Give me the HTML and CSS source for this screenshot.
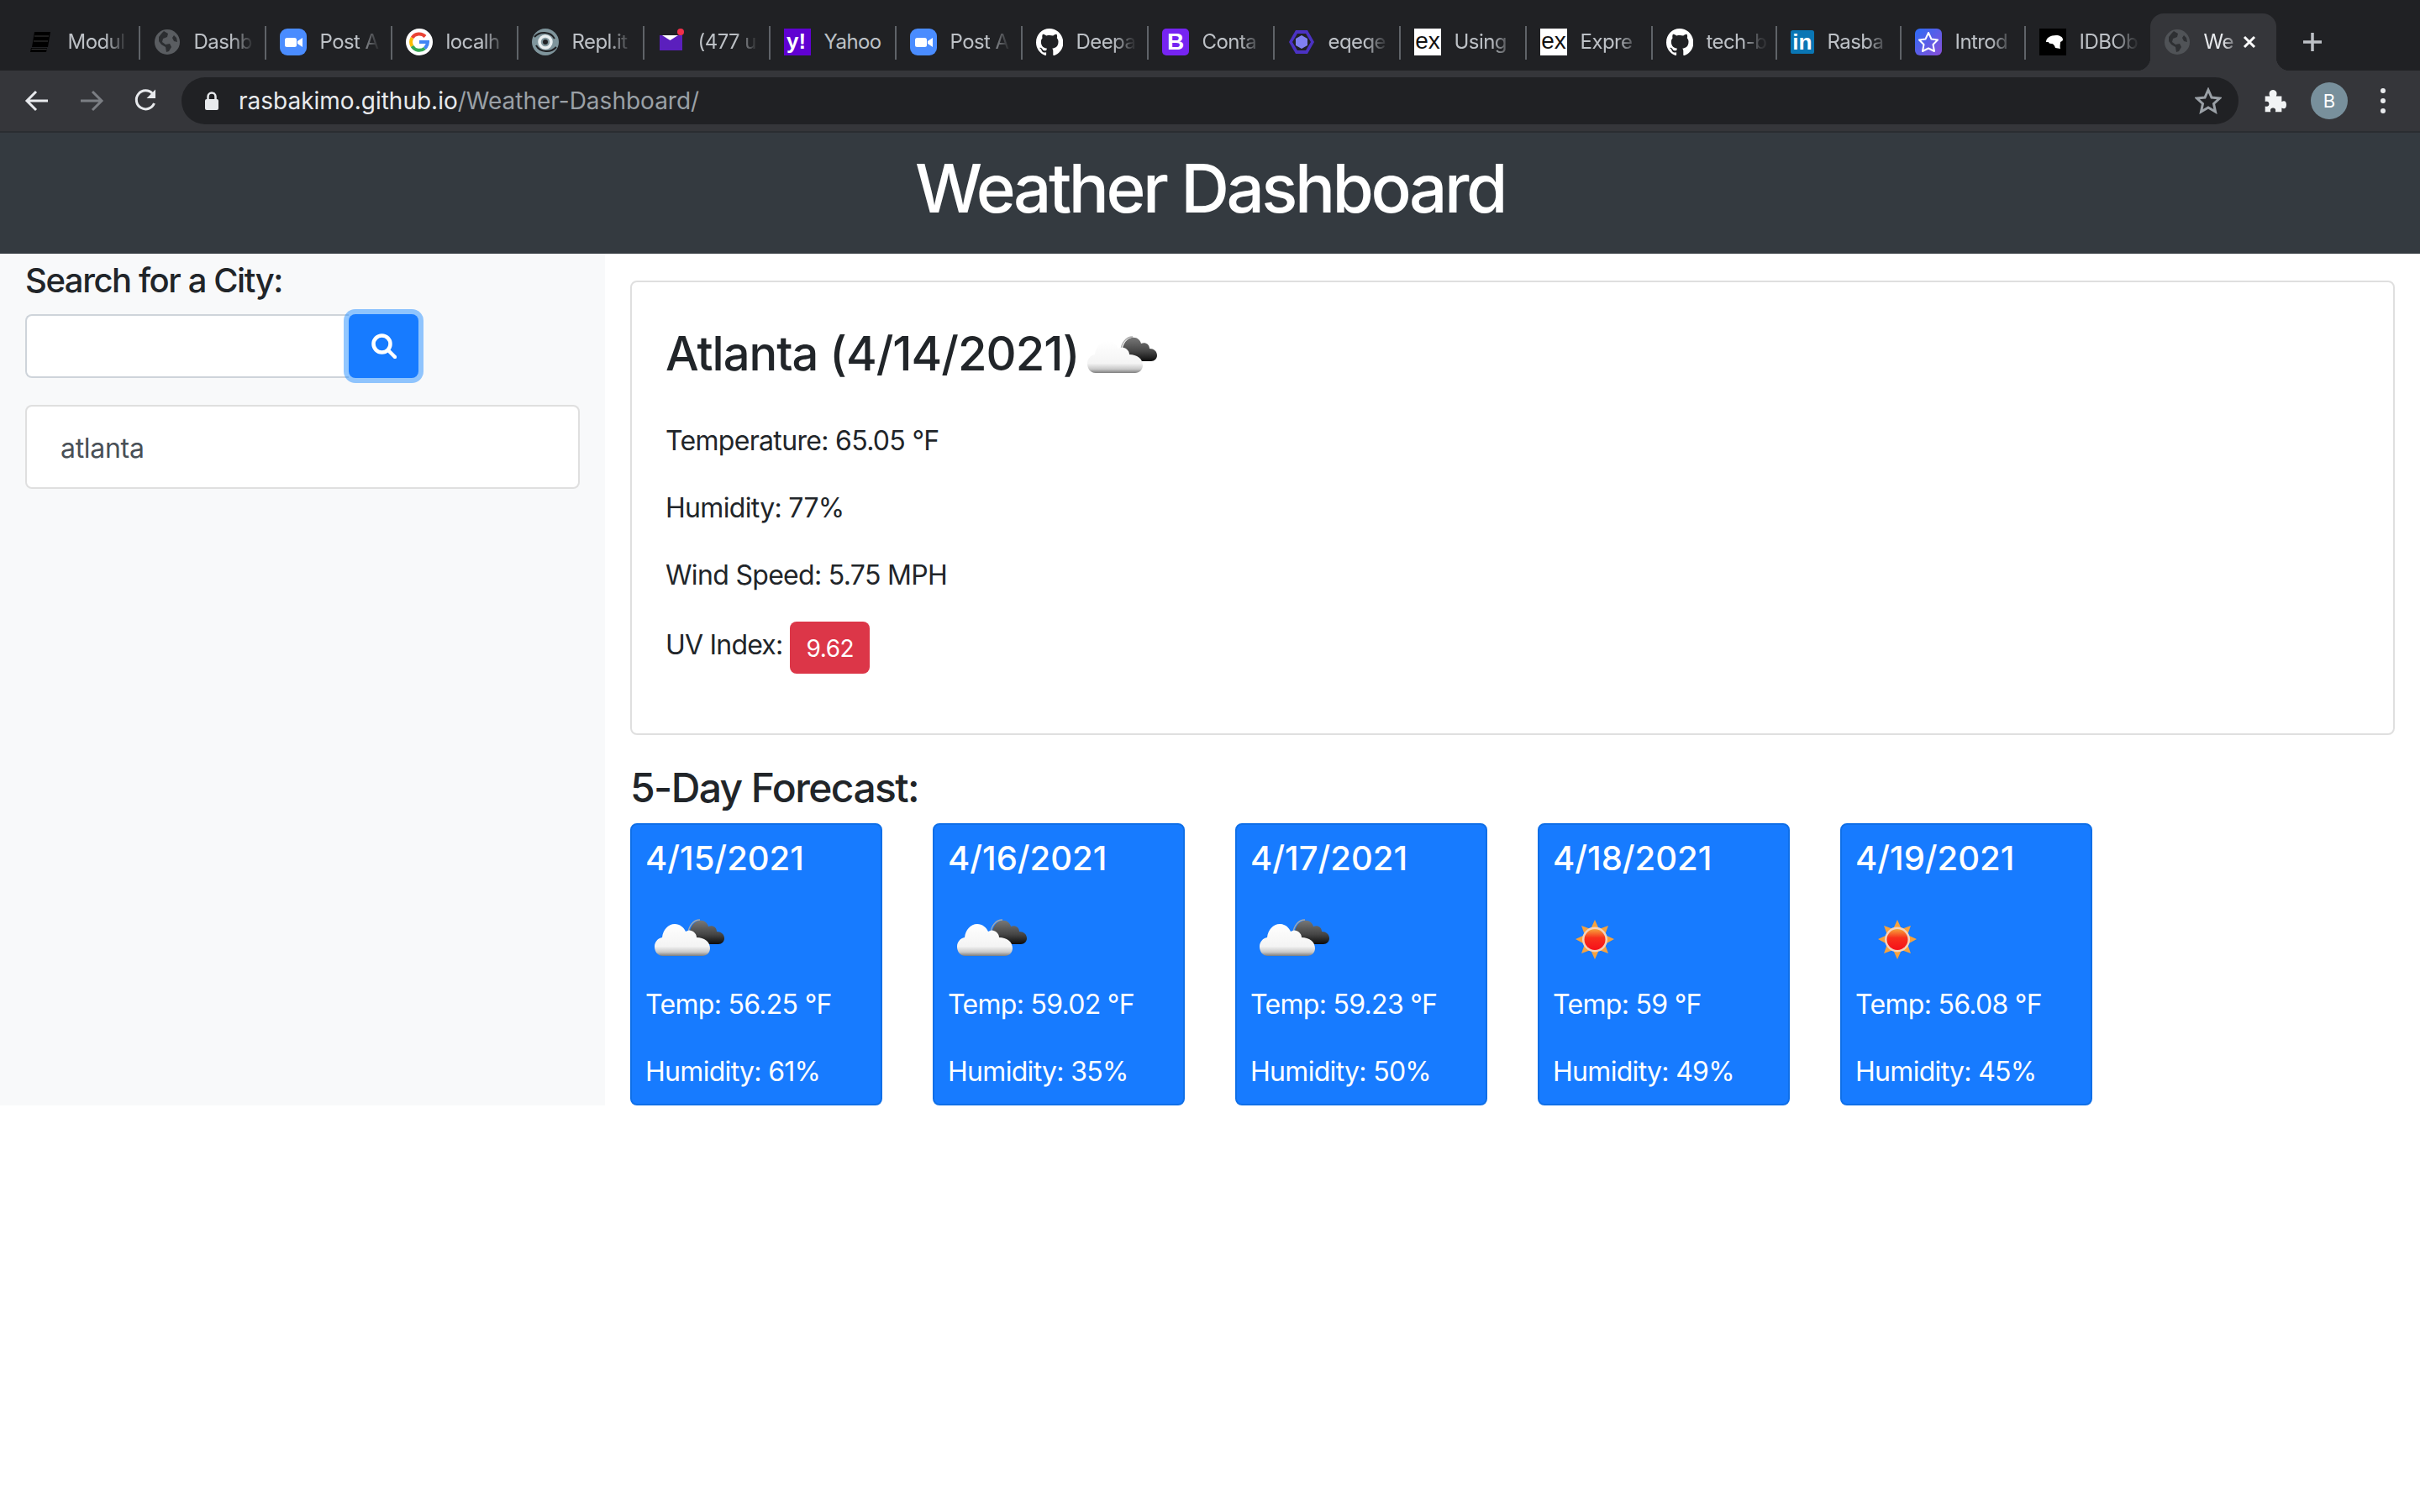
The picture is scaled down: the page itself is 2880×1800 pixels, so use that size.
FILE: index.html
```html
<!DOCTYPE html>
<html lang="en">
<head>
<meta charset="utf-8">
<title>Weather Dashboard</title>
<link rel="stylesheet" href="styles.css">
</head>
<body>
<svg class="defs" width="0" height="0" aria-hidden="true">
  <defs>
    <linearGradient id="whiteCloud" x1="0" y1="0" x2="0" y2="1">
      <stop offset="0" stop-color="#fff"/><stop offset=".7" stop-color="#f4f4f4"/><stop offset=".88" stop-color="#c8c8c8"/><stop offset="1" stop-color="#7e7e7e"/>
    </linearGradient>
    <linearGradient id="darkCloud" x1="0" y1="0" x2="0" y2="1">
      <stop offset="0" stop-color="#777"/><stop offset=".6" stop-color="#444"/><stop offset="1" stop-color="#0c0c0c"/>
    </linearGradient>
    <linearGradient id="sunDisc" x1="0" y1="0" x2="0" y2="1">
      <stop offset="0" stop-color="#f7a53a"/><stop offset=".42" stop-color="#f8301c"/><stop offset="1" stop-color="#f5101a"/>
    </linearGradient>
    <linearGradient id="introGrad" x1="0" y1="0" x2="1" y2="1">
      <stop offset="0" stop-color="#2b6cf6"/><stop offset="1" stop-color="#8a4fd8"/>
    </linearGradient>
    <symbol id="i-clouds" viewBox="0 0 100 100">
      <path fill="url(#darkCloud)" d="M52 48C52 40 55 30 64 28C70 27 74 31 75 35C80 33 85 36 85 41C90 41 94 44 94 49C94 53 91 56 87 56H56Z"/>
      <path fill="none" stroke="#aaa" stroke-width="1.4" d="M51 44C51 35 57 27 65 27"/>
      <path fill="url(#whiteCloud)" d="M21 70C14 70 11 64 11 59C11 53 15 49 20 48C21 39 27 32 35 32C41 32 46 36 48 41C51 39 54 39 57 41C60 43 61 46 61 48C70 48 77 53 77 61C77 66 73 70 68 70Z"/>
    </symbol>
    <symbol id="i-sun" viewBox="0 0 100 100">
      <polygon fill="#f6a23e" points="50,27 55,38 66,34 62,45 73,50 62,56 66,67 55,63 50,74 45,63 34,67 38,56 27,50 38,45 34,34 45,38"/>
      <circle cx="50" cy="50.500" r="15" fill="#f4d3bd"/>
      <circle cx="50" cy="50.500" r="12.500" fill="url(#sunDisc)"/>
    </symbol>
    <symbol id="i-globe" viewBox="0 0 32 32">
      <circle cx="16" cy="16" r="15" fill="#5a5d61"/>
      <path fill="#2c2e31" d="M12 3l5 3-1 4-5 2-1 4 4 3 5-1 2 4-3 5-3 1-1-6-5-3-3-4 0-5 4-5zM24 8l3 3 1 5-4-1-2-4z"/>
    </symbol>
    <symbol id="i-zoom" viewBox="0 0 32 32">
      <rect width="32" height="32" rx="9" fill="#4a8cff"/>
      <rect x="6" y="11" width="14" height="11" rx="2.500" fill="#fff"/>
      <path fill="#fff" d="M21 15l6-4v11l-6-4z"/>
    </symbol>
    <symbol id="i-github" viewBox="0 0 32 32">
      <path fill="#fff" d="M16 0C7 0 0 7.300 0 16.400c0 7.200 4.600 13.400 11 15.600.8.100 1.100-.4 1.100-.8v-2.900c-4.500 1-5.400-2.100-5.400-2.100-.7-1.900-1.800-2.400-1.800-2.400-1.500-1 .1-1 .1-1 1.600.1 2.500 1.700 2.500 1.700 1.400 2.500 3.800 1.800 4.700 1.400.2-1.100.6-1.800 1-2.200-3.600-.4-7.300-1.800-7.300-8.100 0-1.800.6-3.300 1.700-4.400-.2-.4-.7-2.100.2-4.300 0 0 1.300-.4 4.400 1.700 1.300-.4 2.600-.5 4-.5s2.700.2 4 .5c3.100-2.100 4.400-1.700 4.400-1.700.9 2.200.3 3.900.2 4.300 1 1.100 1.700 2.600 1.700 4.400 0 6.300-3.700 7.700-7.300 8.100.6.500 1.100 1.500 1.100 3.100v4.500c0 .4.300 .9 1.100.8 6.400-2.200 11-8.400 11-15.600C32 7.300 25 0 16 0z"/>
    </symbol>
  </defs>
</svg>

<div class="browser">
  <div class="tabstrip">
    <div class="tab">
      <svg class="favicon" viewBox="0 0 32 32"><path fill="#000" d="M8 4h19l-3 18H5z"/><path fill="#000" d="M4 23h19l-1 5H3z"/><path fill="none" stroke="#3a3a3a" stroke-width="1" d="M8 9h17M7 15h17M4.500 24.500h18"/></svg>
      <span class="tab-label">Modul</span>
    </div>
    <div class="tab">
      <svg class="favicon"><use href="#i-globe"/></svg>
      <span class="tab-label">Dashb</span>
    </div>
    <div class="tab">
      <svg class="favicon"><use href="#i-zoom"/></svg>
      <span class="tab-label">Post A</span>
    </div>
    <div class="tab">
      <svg class="favicon" viewBox="0 0 32 32"><circle cx="16" cy="16" r="16" fill="#fff"/><path fill="none" stroke="#ea4335" stroke-width="4" d="M23 9.500A10 10 0 0 0 7.500 11"/><path fill="none" stroke="#fbbc05" stroke-width="4" d="M7.500 11a10 10 0 0 0 0 10"/><path fill="none" stroke="#34a853" stroke-width="4" d="M7.500 21a10 10 0 0 0 15 2.500"/><path fill="none" stroke="#4285f4" stroke-width="4" d="M22.500 23.500A10 10 0 0 0 26 16H16"/></svg>
      <span class="tab-label">localh</span>
    </div>
    <div class="tab">
      <svg class="favicon" viewBox="0 0 32 32"><circle cx="16" cy="16" r="16" fill="#7f959c"/><path fill="none" stroke="#202124" stroke-width="2" d="M3 10c6-7 19-7 24 2M29 22c-6 7-19 7-24-2"/><circle cx="16" cy="16" r="7" fill="none" stroke="#e8eef0" stroke-width="3.500"/><circle cx="16" cy="16" r="3" fill="#202124"/></svg>
      <span class="tab-label">Repl.it</span>
    </div>
    <div class="tab">
      <svg class="favicon" viewBox="0 0 32 32"><rect x="2" y="8" width="27" height="18" fill="#5b1fbd"/><path fill="#fff" d="M5 8h19l-9.500 6z"/><circle cx="27" cy="4" r="4" fill="#f0304a"/></svg>
      <span class="tab-label">(477 u</span>
    </div>
    <div class="tab">
      <svg class="favicon" viewBox="0 0 32 32"><rect width="32" height="32" fill="#6001d2"/><text class="fav-text fav-yahoo" x="3" y="24">y!</text></svg>
      <span class="tab-label tab-label-full">Yahoo</span>
    </div>
    <div class="tab">
      <svg class="favicon"><use href="#i-zoom"/></svg>
      <span class="tab-label">Post A</span>
    </div>
    <div class="tab">
      <svg class="favicon"><use href="#i-github"/></svg>
      <span class="tab-label">Deepa</span>
    </div>
    <div class="tab">
      <svg class="favicon" viewBox="0 0 32 32"><rect width="32" height="32" rx="5" fill="#7624f2"/><text class="fav-text fav-b" x="16" y="25" text-anchor="middle">B</text></svg>
      <span class="tab-label">Conta</span>
    </div>
    <div class="tab">
      <svg class="favicon" viewBox="0 0 32 32"><polygon fill="#4b32c3" points="9,2 23,2 31,16 23,30 9,30 1,16"/><polygon fill="#202124" points="11,6 21,6 27,16 21,26 11,26 5,16"/><polygon fill="#8080f2" points="16,8 23,12 23,20 16,24 9,20 9,12"/></svg>
      <span class="tab-label">eqeqe</span>
    </div>
    <div class="tab">
      <svg class="favicon" viewBox="0 0 32 32"><rect width="32" height="32" fill="#fff"/><text class="fav-text fav-ex" x="16" y="24" text-anchor="middle">ex</text></svg>
      <span class="tab-label">Using</span>
    </div>
    <div class="tab">
      <svg class="favicon" viewBox="0 0 32 32"><rect width="32" height="32" fill="#fff"/><text class="fav-text fav-ex" x="16" y="24" text-anchor="middle">ex</text></svg>
      <span class="tab-label">Expre</span>
    </div>
    <div class="tab tab-narrow">
      <svg class="favicon"><use href="#i-github"/></svg>
      <span class="tab-label">tech-b</span>
    </div>
    <div class="tab tab-narrow">
      <svg class="favicon favicon-in" viewBox="0 0 32 32"><rect width="32" height="32" rx="3" fill="#0a76b4"/><text class="fav-text fav-in" x="16" y="26" text-anchor="middle">in</text></svg>
      <span class="tab-label">Rasba</span>
    </div>
    <div class="tab tab-narrow">
      <svg class="favicon" viewBox="0 0 32 32"><rect width="32" height="32" rx="6" fill="url(#introGrad)"/><polygon fill="none" stroke="#fff" stroke-width="2" stroke-linejoin="round" points="16,5 19.500,12.500 27,13.500 21.500,19 23,27 16,23.500 9,27 10.500,19 5,13.500 12.500,12.500"/></svg>
      <span class="tab-label">Introd</span>
    </div>
    <div class="tab tab-narrow tab-last">
      <svg class="favicon" viewBox="0 0 32 32"><rect width="32" height="32" fill="#000"/><path fill="#fff" d="M8 16C8 11 13 8 20 8c4 0 8 2 8 5 0 2-2 2-3 3 0 3-1 5 0 8l-6-1c-1-3-2-5-5-5-2 0-3-1-3-2z"/></svg>
      <span class="tab-label">IDBOb</span>
    </div>
    <div class="tab-active">
      <svg class="favicon favicon-dim"><use href="#i-globe"/></svg>
      <span class="tab-label tab-label-active">We</span>
      <svg class="tab-close" viewBox="0 0 16 16"><path d="M2 2l12 12M14 2L2 14"/></svg>
    </div>
    <svg class="new-tab" viewBox="0 0 24 24"><path d="M12 1v22M1 12h22"/></svg>
  </div>

  <div class="toolbar">
    <svg class="nav-icon" viewBox="0 0 32 32"><path d="M29 16H5M15 5L4 16l11 11"/></svg>
    <svg class="nav-icon nav-icon-off" viewBox="0 0 32 32"><path d="M3 16h24M17 5l11 11-11 11"/></svg>
    <svg class="nav-icon" viewBox="0 0 32 32"><path d="M25.500 19a11 11 0 1 1-2-11.500"/><path class="solid" d="M27 2.500V13H16.500z"/></svg>
    <div class="omnibox">
      <svg class="lock" viewBox="0 0 18 24"><path class="lock-bow" d="M4.500 11V7a4.500 4.500 0 0 1 9 0v4"/><rect x="1" y="10" width="16" height="13" rx="2"/></svg>
      <span class="url"><span class="url-host">rasbakimo.github.io</span>/Weather-Dashboard/</span>
      <svg class="star" viewBox="0 0 32 32"><polygon points="16,3 20,12 29.500,13 22.500,19.500 24.500,29 16,24 7.500,29 9.500,19.500 2.500,13 12,12"/></svg>
    </div>
    <svg class="puzzle" viewBox="0 0 32 32"><path d="M5 10h6c-2-4 0-8 4-8s6 4 4 8h7v7c4-2 6 0 6 4s-2 6-6 4v5H18c1-4-1-5-3-5s-4 1-3 5H5v-7c4 1 5-1 5-3s-1-4-5-3z"/></svg>
    <div class="avatar">B</div>
    <div class="menu-dots"><i></i><i></i><i></i></div>
  </div>
</div>

<header class="site-header">
  <h1 class="site-title">Weather Dashboard</h1>
</header>

<main class="layout">
  <aside class="sidebar">
    <h5 class="search-title">Search for a City:</h5>
    <form class="search-group">
      <input class="search-input" type="text" aria-label="City">
      <button class="search-btn" type="button" aria-label="Search">
        <svg class="search-icon" viewBox="0 0 30 30"><circle cx="12.500" cy="12.500" r="10"/><path d="M20 20l8 8"/></svg>
      </button>
    </form>
    <div class="history-item">atlanta</div>
  </aside>

  <section class="content">
    <div class="today">
      <div class="today-head">
        <h3 class="today-title">Atlanta (4/14/2021)</h3>
        <svg class="today-icon"><use href="#i-clouds"/></svg>
      </div>
      <p class="stat">Temperature: 65.05 °F</p>
      <p class="stat">Humidity: 77%</p>
      <p class="stat">Wind Speed: 5.75 MPH</p>
      <div class="uv-row">
        <span class="uv-label">UV Index:</span>
        <span class="uv-badge">9.62</span>
      </div>
    </div>

    <h4 class="forecast-title">5-Day Forecast:</h4>
    <div class="forecast">
      <article class="day">
        <h5 class="day-date">4/15/2021</h5>
        <svg class="day-icon"><use href="#i-clouds"/></svg>
        <p class="day-line">Temp: 56.25 °F</p>
        <p class="day-line">Humidity: 61%</p>
      </article>
      <article class="day">
        <h5 class="day-date">4/16/2021</h5>
        <svg class="day-icon"><use href="#i-clouds"/></svg>
        <p class="day-line">Temp: 59.02 °F</p>
        <p class="day-line">Humidity: 35%</p>
      </article>
      <article class="day">
        <h5 class="day-date">4/17/2021</h5>
        <svg class="day-icon"><use href="#i-clouds"/></svg>
        <p class="day-line">Temp: 59.23 °F</p>
        <p class="day-line">Humidity: 50%</p>
      </article>
      <article class="day">
        <h5 class="day-date">4/18/2021</h5>
        <svg class="day-icon"><use href="#i-sun"/></svg>
        <p class="day-line">Temp: 59 °F</p>
        <p class="day-line">Humidity: 49%</p>
      </article>
      <article class="day">
        <h5 class="day-date">4/19/2021</h5>
        <svg class="day-icon"><use href="#i-sun"/></svg>
        <p class="day-line">Temp: 56.08 °F</p>
        <p class="day-line">Humidity: 45%</p>
      </article>
    </div>
  </section>
</main>
</body>
</html>
```
FILE: styles.css
```css
* { box-sizing: border-box; }
html, body { margin: 0; padding: 0; background: #fff; }
body { font-family: "Inter", "Liberation Sans", sans-serif; color: #212529; font-size: 32px; line-height: 48px; }
.defs { display: block; height: 0; width: 0; overflow: hidden; }
h1, h3, h4, h5, p { margin: 0; font-weight: 500; }
p { font-weight: 400; }

/* browser chrome */
.browser { background: #35363a; }
.tabstrip { height: 84px; background: #202124; display: flex; align-items: flex-start; padding: 16px 0 0 16.600px; }
.tab { width: 150px; height: 68px; display: flex; align-items: center; padding: 0 12px 0 16px; gap: 16px; position: relative; }
.tab::after { content: ""; position: absolute; right: 0; top: 15px; width: 2px; height: 40px; background: #5f6368; }
.tab-narrow { width: 148px; }
.tab-last::after { display: none; }
.favicon { width: 32px; height: 32px; flex: none; }
.favicon-in { width: 28px; }
.favicon-dim { opacity: .75; }
.tab-label { flex: 1; min-width: 0; overflow: hidden; white-space: nowrap; font-size: 24px; line-height: 32px; color: #bdc1c6; letter-spacing: -.6px; -webkit-mask-image: linear-gradient(to right, #000 calc(100% - 30px), rgba(0, 0, 0, .12) calc(100% - 6px)); mask-image: linear-gradient(to right, #000 calc(100% - 30px), rgba(0, 0, 0, .12) calc(100% - 6px)); }
.tab-label-full { -webkit-mask-image: none; mask-image: none; }
.tab-label-active { color: #e8eaed; -webkit-mask-image: linear-gradient(to right, #000 22px, rgba(0, 0, 0, .35) 36px); mask-image: linear-gradient(to right, #000 22px, rgba(0, 0, 0, .35) 36px); }
.fav-text { font-family: "Liberation Sans", sans-serif; }
.fav-yahoo { font-size: 26px; font-weight: 700; fill: #fff; }
.fav-b { font-size: 28px; font-weight: 700; fill: #fff; }
.fav-ex { font-size: 28px; fill: #111; }
.fav-in { font-size: 30px; font-weight: 700; fill: #fff; }
.tab-active { width: 150px; height: 68px; background: #35363a; border-radius: 16px 16px 0 0; display: flex; align-items: center; padding: 0 24px 0 16px; gap: 16px; position: relative; }
.tab-active::before, .tab-active::after { content: ""; position: absolute; bottom: 0; width: 16px; height: 16px; }
.tab-active::before { left: -16px; background: radial-gradient(circle at 0 0, transparent 16px, #35363a 16.500px); }
.tab-active::after { right: -16px; background: radial-gradient(circle at 100% 0, transparent 16px, #35363a 16.500px); }
.tab-close { width: 16px; height: 16px; flex: none; margin-left: -10px; fill: none; stroke: #fff; stroke-width: 3; }
.new-tab { width: 24px; height: 24px; margin: 22px 0 0 31px; fill: none; stroke: #bdc1c6; stroke-width: 3.500; flex: none; }

.toolbar { height: 72px; display: flex; align-items: center; padding: 0 0 0 28px; }
.nav-icon { width: 32px; height: 32px; margin-right: 33px; fill: none; stroke: #e8eaed; stroke-width: 3; flex: none; }
.nav-icon-off { stroke: #7b7e83; }
.nav-icon .solid { fill: #e8eaed; stroke: none; }
.omnibox { width: 2448px; height: 56px; margin-left: -7px; background: #202124; border-radius: 28px; display: flex; align-items: center; padding: 0 20px 0 27px; }
.lock { width: 18px; height: 24px; flex: none; fill: #e8eaed; margin-right: 23px; }
.lock-bow { fill: none; stroke: #e8eaed; stroke-width: 2.500; }
.url { flex: 1; font-size: 28px; line-height: 56px; color: #9aa0a6; white-space: nowrap; }
.url-host { color: #e8eaed; }
.star { width: 32px; height: 32px; fill: none; stroke: #9aa0a6; stroke-width: 3; stroke-linejoin: miter; flex: none; }
.puzzle { width: 30px; height: 32px; margin-left: 27px; fill: #f1f3f4; flex: none; }
.avatar { width: 44px; height: 44px; border-radius: 50%; background: #78909c; color: #fff; font-size: 22px; line-height: 44px; text-align: center; margin-left: 29px; flex: none; }
.menu-dots { display: flex; flex-direction: column; gap: 6px; margin-left: 39px; flex: none; }
.menu-dots i { display: block; width: 6px; height: 6px; border-radius: 50%; background: #e8eaed; }

/* page header */
.site-header { height: 146px; background: #343a40; border-top: 2px solid #2a2d31; display: flex; justify-content: center; align-items: flex-start; padding-top: 18px; }
.site-title { font-size: 80px; line-height: 96px; color: #fff; font-weight: 550; letter-spacing: -3.500px; }

/* layout */
.layout { display: flex; align-items: stretch; }
.sidebar { width: 720px; flex: none; background: #f8f9fa; padding: 8px 30px 0; }
.search-title { font-size: 40px; line-height: 48px; margin-bottom: 16px; letter-spacing: -1.430px; font-weight: 550; }
.search-group { display: flex; width: 468px; height: 76px; }
.search-input { flex: 1; min-width: 0; height: 76px; border: 2px solid #ced4da; border-right: 0; border-radius: 8px 0 0 8px; background: #fff; padding: 12px 24px; outline: 0; }
.search-btn { width: 83px; height: 76px; flex: none; border: 0; background: #177bff; border-radius: 8px; box-shadow: 0 0 0 6px rgba(38, 143, 255, .5); display: flex; align-items: center; justify-content: center; padding: 0; position: relative; }
.search-icon { width: 30px; height: 30px; fill: none; stroke: #fff; stroke-width: 4.500; stroke-linecap: round; }
.history-item { margin-top: 32px; height: 100px; width: 660px; background: #fff; border: 2px solid rgba(0, 0, 0, .125); border-radius: 8px; padding: 26px 40px 22px; color: #495057; letter-spacing: -.3px; }

.content { flex: 1; padding: 32px 30px 0; min-width: 0; }
.today { height: 541px; border: 2px solid rgba(0, 0, 0, .125); border-radius: 8px; padding: 40px; }
.today-head { display: flex; align-items: flex-start; height: 109px; margin-bottom: 16px; }
.today-title { font-size: 56px; line-height: 67px; padding-top: 12px; letter-spacing: -1px; font-weight: 550; }
.today-icon { width: 100px; height: 100px; margin: -2px 0 0 -1px; flex: none; }
.stat { margin-bottom: 32px; letter-spacing: -.680px; }
.uv-row { display: flex; align-items: flex-start; margin-top: -2px; }
.uv-label { padding-top: 5px; letter-spacing: -.800px; }
.uv-badge { margin: 1px 0 0 9px; height: 62px; background: #dc3648; color: #fff; font-size: 28px; line-height: 64px; padding: 0 19px; border-radius: 8px; letter-spacing: -.4px; }

.forecast-title { font-size: 48px; line-height: 58px; margin: 34px 0 13px; letter-spacing: -1.600px; font-weight: 550; }
.forecast { display: flex; gap: 60px; }
.day { width: 300px; height: 336px; background: #177bff; border: 2px solid #0f6fe8; border-radius: 8px; padding: 16px; color: #fff; }
.day-date { font-size: 40px; line-height: 48px; margin-bottom: 22px; }
.day-icon { display: block; width: 100px; height: 100px; margin-bottom: 4px; }
.day-line { margin-bottom: 32px; letter-spacing: -.700px; }
.day-line:last-child { margin-bottom: 0; }
```
